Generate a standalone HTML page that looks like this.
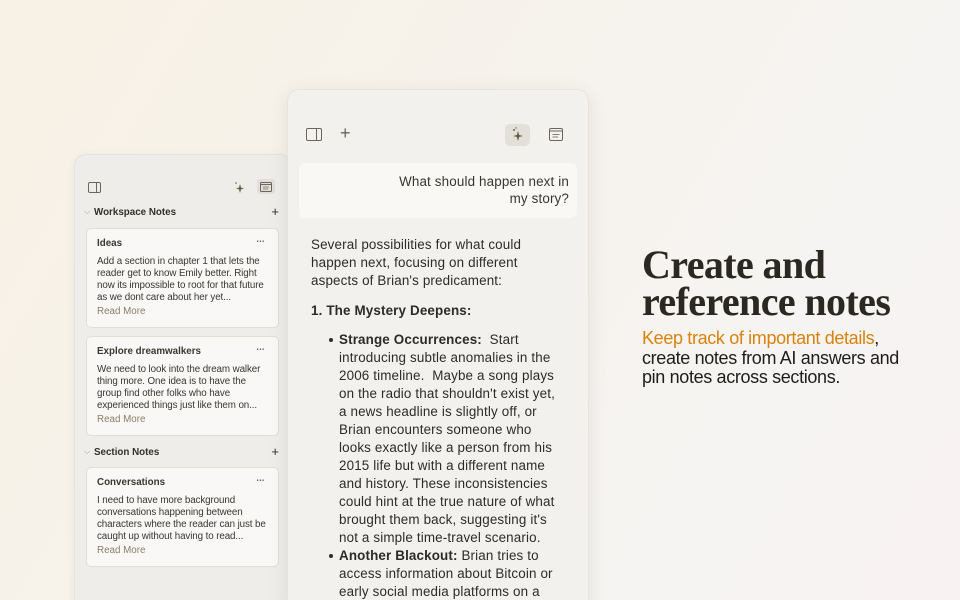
<!DOCTYPE html>
<html><head><meta charset="utf-8"><style>
*{margin:0;padding:0;box-sizing:border-box}
html,body{width:960px;height:600px;overflow:hidden}
body{position:relative;font-family:"Liberation Sans",sans-serif;background:linear-gradient(120deg,#f8f1e5 0%,#f6f2ec 45%,#f6f4f2 75%,#f8f2f2 100%);}
.side{position:absolute;left:74px;top:154px;width:218px;height:460px;background:#efede9;border-radius:12px;border:1px solid #e6e2da;box-shadow:0 2px 10px rgba(0,0,0,.05)}
.main{position:absolute;left:287px;top:89px;width:302px;height:530px;background:#f2f1ee;border-radius:12px;border:1px solid #e8e4dc;box-shadow:0 4px 20px rgba(0,0,0,.08)}
.card{position:absolute;left:11px;width:193px;height:100px;background:#f9f8f6;border:1px solid #e2ded6;border-radius:5px;padding:9px 10px;color:#3a3630;overflow:hidden}
.card h4{font-size:9.8px;font-weight:bold;margin-bottom:7px;position:relative}
.card h4:after{content:"•••";position:absolute;right:3px;top:1px;font-size:5px;letter-spacing:1px;color:#555}
.card p{font-size:9.8px;line-height:12px;letter-spacing:-0.1px}
.card .rm{color:#8a7e68;font-size:9.8px;line-height:12px;margin-top:2px}
.sec{position:absolute;left:9px;font-size:9.8px;font-weight:bold;color:#33302a;width:195px}
.sec span{position:absolute;right:0;top:-3px;font-size:13px;font-weight:normal}
.txt{position:absolute;left:23px;top:146px;width:252px;font-size:13.4px;line-height:18px;color:#2e2b27;letter-spacing:0.15px}
ul{list-style:none}
li{position:relative;padding-left:28px}
li:before{content:"";position:absolute;left:18px;top:7px;width:4px;height:4px;border-radius:50%;background:#2e2b27}
</style></head><body>
<div class="side">
<svg style="position:absolute;left:13px;top:27px" width="13" height="11" viewBox="0 0 13 11"><rect x=".5" y=".5" width="12" height="10" rx="1.5" fill="none" stroke="#6b655b"/><line x1="8.5" y1="1" x2="8.5" y2="10" stroke="#6b655b"/></svg>
<svg style="position:absolute;left:158px;top:26px" width="12" height="12" viewBox="0 0 12 12"><path d="M7 3 L8 6.5 L11 7.5 L8 8.5 L7 12 L6 8.5 L3 7.5 L6 6.5Z" fill="#6b5f45"/><circle cx="3" cy="2" r="0.8" fill="#6b5f45"/></svg>
<div style="position:absolute;left:182px;top:24px;width:18px;height:15px;background:#e2dfd8;border-radius:3px"></div>
<svg style="position:absolute;left:185px;top:27px" width="12" height="10" viewBox="0 0 12 10"><rect x=".5" y=".5" width="11" height="9" rx="1" fill="none" stroke="#6b655b"/><line x1="1" y1="2.5" x2="11" y2="2.5" stroke="#6b655b"/><line x1="3" y1="5" x2="9" y2="5" stroke="#6b655b" stroke-width=".7"/><line x1="3" y1="7" x2="8" y2="7" stroke="#6b655b" stroke-width=".7"/></svg>
<div class="sec" style="top:52px"><span style="color:#999;font-size:8px;top:0;left:0;right:auto">⌵</span><b style="margin-left:10px">Workspace Notes</b><span>+</span></div>
<div class="card" style="top:73px"><h4>Ideas</h4><p>Add a section in chapter 1 that lets the reader get to know Emily better. Right now its impossible to root for that future as we dont care about her yet...</p><div class="rm">Read More</div></div>
<div class="card" style="top:181px"><h4>Explore dreamwalkers</h4><p>We need to look into the dream walker thing more. One idea is to have the group find other folks who have experienced things just like them on...</p><div class="rm">Read More</div></div>
<div class="sec" style="top:292px"><span style="color:#999;font-size:8px;top:0;left:0;right:auto">⌵</span><b style="margin-left:10px">Section Notes</b><span>+</span></div>
<div class="card" style="top:312px"><h4>Conversations</h4><p>I need to have more background conversations happening between characters where the reader can just be caught up without having to read...</p><div class="rm">Read More</div></div>
</div>
<div class="main">
<svg style="position:absolute;left:18px;top:38px" width="16" height="13" viewBox="0 0 16 13"><rect x=".5" y=".5" width="15" height="12" rx="1.5" fill="none" stroke="#6b655b"/><line x1="10.5" y1="1" x2="10.5" y2="12" stroke="#6b655b"/></svg>
<div style="position:absolute;left:52px;top:33px;font-size:18px;color:#6b655b">+</div>
<div style="position:absolute;left:217px;top:34px;width:25px;height:22px;background:#e3e0da;border-radius:5px"></div>
<svg style="position:absolute;left:222px;top:37px" width="15" height="15" viewBox="0 0 15 15"><path d="M8 4 L9.2 8 L13 9 L9.2 10 L8 14 L6.8 10 L3 9 L6.8 8Z" fill="#6b5f45"/><circle cx="4" cy="3" r="1" fill="#6b5f45"/><circle cx="6" cy="1" r=".7" fill="#6b5f45"/></svg>
<svg style="position:absolute;left:261px;top:38px" width="14" height="13" viewBox="0 0 14 13"><rect x=".5" y=".5" width="13" height="12" rx="1.5" fill="none" stroke="#6b655b"/><line x1="1" y1="3" x2="13" y2="3" stroke="#6b655b"/><line x1="3.5" y1="6.5" x2="10.5" y2="6.5" stroke="#6b655b" stroke-width=".8"/><line x1="3.5" y1="9" x2="9" y2="9" stroke="#6b655b" stroke-width=".8"/></svg>
<div style="position:absolute;left:11px;top:73px;width:278px;height:55px;background:#f9f8f5;border-radius:6px;text-align:right;padding:10px 8px 0 0;font-size:13.4px;line-height:17px;color:#3a3630;letter-spacing:0.15px">What should happen next in<br>my story?</div>
<div class="txt">Several possibilities for what could happen next, focusing on different aspects of Brian's predicament:
<div style="font-weight:bold;margin:12px 0 11px">1. The Mystery Deepens:</div>
<ul><li><b>Strange Occurrences:</b>&nbsp; Start introducing subtle anomalies in the 2006 timeline.&nbsp; Maybe a song plays on the radio that shouldn't exist yet, a news headline is slightly off, or Brian encounters someone who looks exactly like a person from his 2015 life but with a different name and history. These inconsistencies could hint at the true nature of what brought them back, suggesting it's not a simple time-travel scenario.</li>
<li><b>Another Blackout:</b> Brian tries to access information about Bitcoin or early social media platforms on a</li></ul></div>
</div>
<div style="position:absolute;left:642px;top:246px;font-family:'Liberation Serif',serif;font-weight:bold;font-size:40px;line-height:37px;color:#2a2820;letter-spacing:-0.6px;white-space:nowrap">Create and<br>reference notes</div>
<div style="position:absolute;left:642px;top:329px;font-size:18px;line-height:19.5px;color:#1f1d1a;letter-spacing:-0.35px;white-space:nowrap"><span style="color:#d9820e">Keep track of important details</span>,<br>create notes from AI answers and<br>pin notes across sections.</div>
</body></html>
